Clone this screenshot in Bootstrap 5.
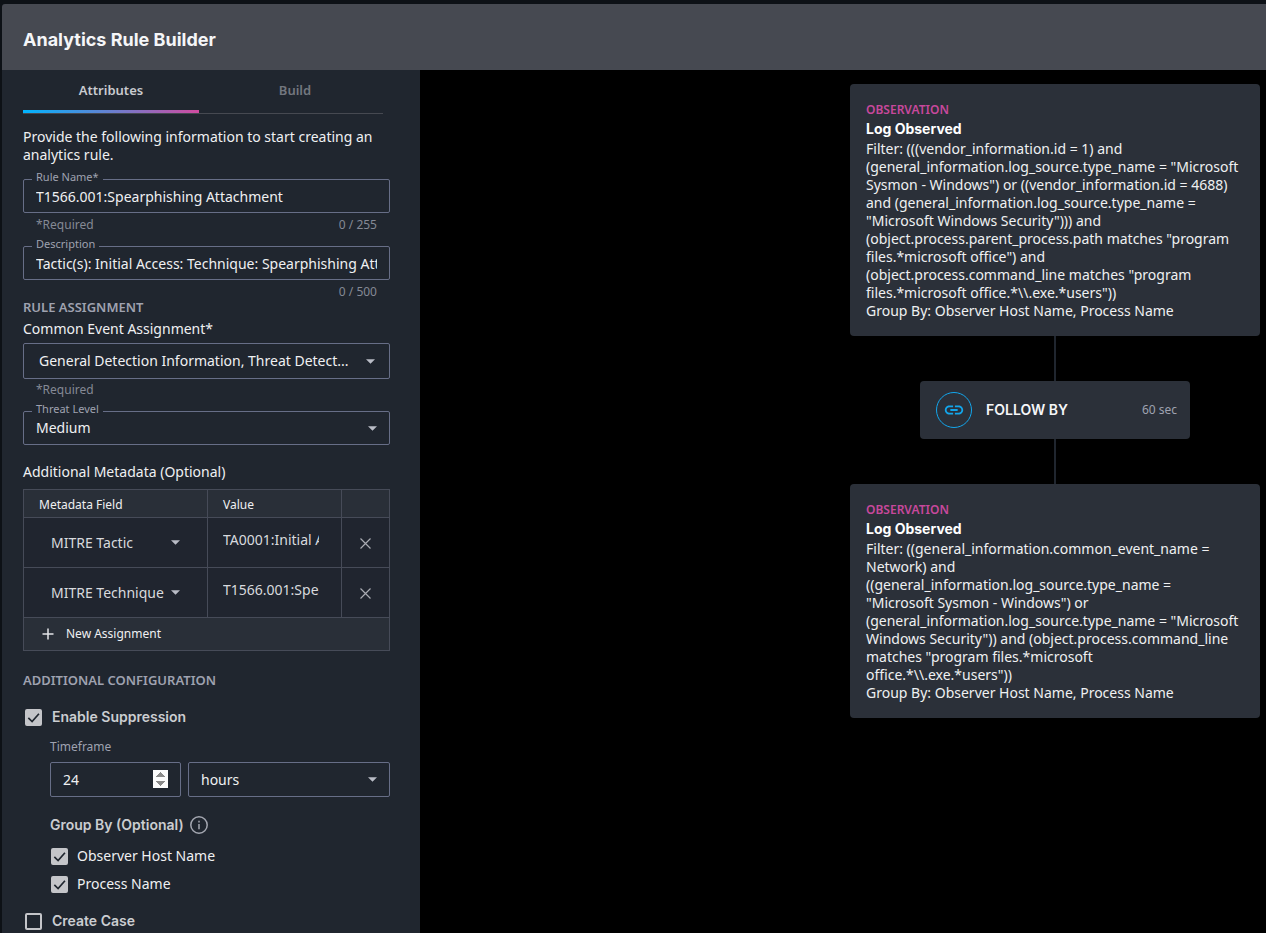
<!DOCTYPE html>
<html lang="en">
<head>
<meta charset="utf-8">
<meta name="viewport" content="width=device-width, initial-scale=1">
<title>Analytics Rule Builder</title>
<link href="https://cdn.jsdelivr.net/npm/bootstrap@5.3.0/dist/css/bootstrap.min.css" rel="stylesheet">
<style>
  :root { --panel: #20262f; --raised: #2b3039; --line: #676e87; --soft: #9fa2b0; --text: #eff0f2; }
  body { background: #0d1116; color: var(--text); font: 400 14px/18px "Noto Sans", sans-serif; }
  .shell { min-height: 100vh; padding: 4px 0 0 2px; }
  .topbar { background: #464951; height: 66px; padding: 6px 21px 0; border-top-left-radius: 3px; }
  .display-face { font-family: Inter, sans-serif; font-weight: 600; }
  .topbar h1 { font-size: 18px; line-height: 24px; font-weight: 700; color: #f5f6f8; }
  .side { background: var(--panel); flex: 0 0 418px; padding: 0 30px 2px 21px; }
  .canvas { background: #000; padding: 14px 6px 14px 14px; }

  .rule-tabs { gap: 8px; margin-right: 7px; border-bottom: 1px solid #464951; }
  .rule-tabs button { height: 43px; padding: 0 0 3px; border: 0; background: none; color: #73777f; font-size: 13px; font-weight: 600; flex: 1 1 0; }
  .rule-tabs button.active { color: #c9cbd0; background: linear-gradient(90deg, #00b4ff, #d04ba0) bottom / 100% 3px no-repeat; }
  .intro { margin: 14px 0 15px; }

  .outlined { position: relative; }
  .outlined label { position: absolute; top: -9px; left: 9px; padding: 0 4px; background: var(--panel); color: var(--soft); font-size: 11px; line-height: 14px; }
  .box { height: 34px; padding: 0 12px; background-color: transparent; border: 1px solid var(--line); border-radius: 2px; color: var(--text); font-size: 14px; line-height: 18px; }
  select.box, .cell-select { appearance: none; background: url("data:image/svg+xml,%3Csvg xmlns='http://www.w3.org/2000/svg' viewBox='0 0 10 5'%3E%3Cpath d='M0 0h10L5 5z' fill='%23b9bcc6'/%3E%3C/svg%3E") right 12px center / 9px 5px no-repeat; }
  .box.tall { height: 36px; }
  select.box.tall { padding-left: 15px; padding-right: 30px; background-position: right 14px center; }
  .box.mid { height: 35px; }
  select.box option, .cell-select option { background: var(--panel); }
  .hint { margin-top: 5px; padding: 0 13px; color: #858995; font-size: 12px; line-height: 14px; }
  .hint + .outlined { margin-top: 14px; }
  .box.tall + .hint { margin-top: 4px; }
  .section-label { color: var(--soft); font-size: 13px; line-height: 16px; font-weight: 600; }
  .event-label { margin: 5px 0; }
  .meta-title { margin: 18px 0 8px; }
  .config-title { margin: 21px 0 20px; }

  .meta-table { table-layout: fixed; border-collapse: collapse; border: 1px solid #5a5f6b; }
  .meta-table .c1 { width: 184px; }
  .meta-table .c3 { width: 48px; }
  .meta-table th { height: 28px; padding: 3px 15px 0; font-size: 12px; font-weight: 400; }
  .meta-table td { height: 50px; padding: 0 15px; }
  .meta-table thead, .meta-table tfoot { background: #292f38; }
  .meta-table th, .meta-table td { border: 1px solid #464b58; }
  .meta-table tbody { background: #20252f; border-top: 1px solid #5a5f6b; border-bottom: 1px solid #5a5f6b; }
  .meta-table tfoot td { height: 33px; padding-left: 18px; }
  .cell-select { width: 100%; border: 0; color: #d8dade; padding: 0; background-position: right center; }
  .meta-table td.field { padding: 0 27px; }
  .meta-table td.amount { padding: 0 22px 6px 15px; }
  .cell-input { width: 100%; border: 0; padding: 0; background: none; color: #d8dade; }
  .bare { border: 0; padding: 0; background: none; color: inherit; }
  .add { gap: 12px; font-size: 12px; }

  .tick-row { gap: 10px; padding-left: 2px; }
  .nested .tick-row { gap: 9px; padding-left: 1px; }
  .tick { appearance: none; flex: none; width: 17px; height: 17px; margin: 0; border: 2px solid #c4c5c9; border-radius: 2px; }
  .tick:checked { background: #c4c5c9 url("data:image/svg+xml,%3Csvg xmlns='http://www.w3.org/2000/svg' viewBox='0 0 16 16'%3E%3Cpath d='M2.5 8.5l4 3.8L13.8 4' fill='none' stroke='%2320262f' stroke-width='1.8'/%3E%3C/svg%3E") center / 15px 15px no-repeat; }
  .bold-label { color: #cbcdd1; }
  .nested { padding-left: 27px; }
  .time-label { margin: 12px 0 6px; color: var(--soft); font-size: 12px; }
  .span-row { gap: 7px; }
  .count { flex: 0 0 131px; min-width: 0; width: 131px; }
  .count::-webkit-inner-spin-button { opacity: 1; }
  .group-title { gap: 6px; margin: 19px 0 13px; }
  .tick-row + .tick-row { margin-top: 10px; }
  .nested + .case { margin-top: 19px; }

  .node { background: var(--raised); border-radius: 4px; }
  .observation { width: 410px; padding: 17px 20px 16px 16px; }
  .observation .kind { color: #c7489c; font-size: 12px; line-height: 18px; font-weight: 600; }
  .observation h2 { font-size: 14px; line-height: 20px; font-weight: 700; color: #fff; margin: 0 0 1px; }
  .follow { width: 270px; height: 58px; padding: 0 13px 0 16px; }
  .follow strong { font-size: 14px; color: #f5f6f8; }
  .follow .wait { color: var(--soft); font-size: 12px; }
  .ring { width: 36px; height: 36px; border: 1px solid #13a6ec; border-radius: 50%; margin-right: 14px; }
  .link-line { width: 2px; height: 45px; background: #20262f; }
</style>
</head>
<body>
<div class="shell d-flex flex-column">
  <header class="topbar d-flex align-items-center">
    <h1 class="display-face m-0">Analytics Rule Builder</h1>
  </header>
  <div class="d-flex flex-grow-1">
    <form class="side">
      <div class="rule-tabs d-flex" role="tablist">
        <button type="button" class="active" role="tab" aria-selected="true">Attributes</button>
        <button type="button" role="tab" aria-selected="false">Build</button>
      </div>
      <p class="intro">Provide the following information to start creating an analytics rule.</p>

      <div class="outlined">
        <label for="name">Rule Name*</label>
        <input id="name" class="box w-100 d-block" type="text" value="T1566.001:Spearphishing Attachment">
      </div>
      <div class="hint d-flex justify-content-between"><span>*Required</span><span>0 / 255</span></div>

      <div class="outlined">
        <label for="desc">Description</label>
        <input id="desc" class="box w-100 d-block" type="text" value="Tactic(s): Initial Access: Technique: Spearphishing Attachment">
      </div>
      <div class="hint text-end">0 / 500</div>

      <div class="section-label">RULE ASSIGNMENT</div>
      <label class="event-label d-block" for="event">Common Event Assignment*</label>
      <select id="event" class="box tall w-100 d-block"><option>General Detection Information, Threat Detect...</option></select>
      <div class="hint">*Required</div>

      <div class="outlined">
        <label for="level">Threat Level</label>
        <select id="level" class="box w-100 d-block"><option>Medium</option></select>
      </div>

      <div class="meta-title">Additional Metadata (Optional)</div>
      <table class="meta-table w-100">
        <colgroup><col class="c1"><col><col class="c3"></colgroup>
        <thead><tr><th scope="col">Metadata Field</th><th scope="col">Value</th><th></th></tr></thead>
        <tbody>
          <tr>
            <td class="field"><select class="cell-select" aria-label="Metadata field 1"><option>MITRE Tactic</option></select></td>
            <td class="amount"><input class="cell-input" aria-label="Value 1" value="TA0001:Initial Access"></td>
            <td class="p-0 text-center"><button type="button" class="bare" aria-label="Remove"><svg width="11" height="11" viewBox="0 0 11 11" stroke="#a9abb2" stroke-width="1.2"><path d="M.5.5l10 10M10.5.5l-10 10"/></svg></button></td>
          </tr>
          <tr>
            <td class="field"><select class="cell-select" aria-label="Metadata field 2"><option>MITRE Technique</option></select></td>
            <td class="amount"><input class="cell-input" aria-label="Value 2" value="T1566.001:Spearphishing"></td>
            <td class="p-0 text-center"><button type="button" class="bare" aria-label="Remove"><svg width="11" height="11" viewBox="0 0 11 11" stroke="#a9abb2" stroke-width="1.2"><path d="M.5.5l10 10M10.5.5l-10 10"/></svg></button></td>
          </tr>
        </tbody>
        <tfoot><tr><td colspan="3"><button type="button" class="bare add d-flex align-items-center"><svg width="12" height="12" viewBox="0 0 12 12" stroke="#e3e5e8" stroke-width="1.5"><path d="M6 .5v11M.5 6h11"/></svg>New Assignment</button></td></tr></tfoot>
      </table>

      <div class="section-label config-title">ADDITIONAL CONFIGURATION</div>
      <div class="tick-row d-flex align-items-center">
        <input class="tick" type="checkbox" id="suppress" checked>
        <label class="display-face bold-label" for="suppress">Enable Suppression</label>
      </div>
      <div class="nested">
        <label class="time-label d-block" for="span">Timeframe</label>
        <div class="d-flex span-row">
          <input id="span" class="box mid count" type="number" value="24">
          <select class="box mid flex-grow-1" aria-label="Unit"><option>hours</option></select>
        </div>
        <div class="group-title d-flex align-items-center">
          <span class="display-face bold-label">Group By (Optional)</span>
          <svg width="18" height="18" viewBox="0 0 18 18" fill="none" stroke="#a3a6b0" stroke-width="1.5"><circle cx="9" cy="9" r="8.2"/><path d="M9 8v5.2M9 4.8v1.6"/></svg>
        </div>
        <div class="tick-row d-flex align-items-center"><input class="tick" type="checkbox" id="host" checked><label for="host">Observer Host Name</label></div>
        <div class="tick-row d-flex align-items-center"><input class="tick" type="checkbox" id="proc" checked><label for="proc">Process Name</label></div>
      </div>
      <div class="tick-row case d-flex align-items-center">
        <input class="tick" type="checkbox" id="case">
        <label class="display-face bold-label" for="case">Create Case</label>
      </div>
    </form>

    <main class="canvas flex-grow-1 d-flex justify-content-end align-items-start">
      <div class="d-flex flex-column align-items-center">
        <section class="node observation">
          <div class="kind">OBSERVATION</div>
          <h2 class="display-face">Log Observed</h2>
          <div>Filter: (((vendor_information.id = 1) and (general_information.log_source.type_name = "Microsoft Sysmon - Windows") or ((vendor_information.id = 4688) and (general_information.log_source.type_name = "Microsoft Windows Security"))) and (object.process.parent_process.path matches "program files.*microsoft office") and (object.process.command_line matches "program files.*microsoft office.*\\.exe.*users"))</div>
          <div>Group By: Observer Host Name, Process Name</div>
        </section>
        <div class="link-line"></div>
        <section class="node follow d-flex align-items-center">
          <span class="ring d-flex align-items-center justify-content-center"><svg width="22" height="22" viewBox="0 0 24 24" fill="#13a6ec"><path d="M3.9 12c0-1.71 1.39-3.1 3.1-3.1h4V7H7c-2.76 0-5 2.24-5 5s2.24 5 5 5h4v-1.9H7c-1.71 0-3.1-1.39-3.1-3.1zM8 13h8v-2H8v2zm9-6h-4v1.9h4c1.71 0 3.1 1.39 3.1 3.1s-1.39 3.1-3.1 3.1h-4V17h4c2.76 0 5-2.24 5-5s-2.24-5-5-5z"/></svg></span>
          <strong class="display-face">FOLLOW BY</strong>
          <span class="wait ms-auto">60 sec</span>
        </section>
        <div class="link-line"></div>
        <section class="node observation">
          <div class="kind">OBSERVATION</div>
          <h2 class="display-face">Log Observed</h2>
          <div>Filter: ((general_information.common_event_name = Network) and ((general_information.log_source.type_name = "Microsoft Sysmon - Windows") or (general_information.log_source.type_name = "Microsoft Windows Security")) and (object.process.command_line matches "program files.*microsoft office.*\\.exe.*users"))</div>
          <div>Group By: Observer Host Name, Process Name</div>
        </section>
      </div>
    </main>
  </div>
</div>
<script src="https://cdn.jsdelivr.net/npm/bootstrap@5.3.0/dist/js/bootstrap.bundle.min.js"></script>
</body>
</html>
